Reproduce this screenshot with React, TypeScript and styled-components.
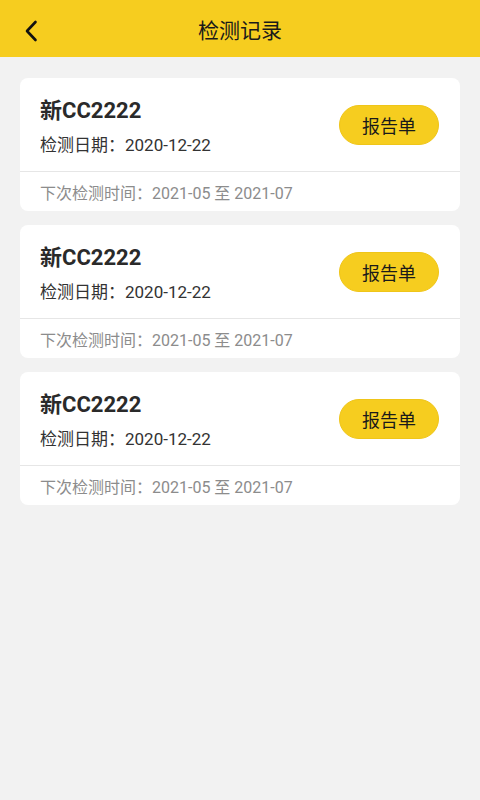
import React from "react";
import styled, { createGlobalStyle } from "styled-components";

const GlobalStyle = createGlobalStyle`
  html, body {
    margin: 0;
    padding: 0;
    background: #f2f2f2;
    font-family: Roboto, "Noto Sans CJK SC", sans-serif;
  }
`;

const Page = styled.div`
  width: 480px;
  min-height: 800px;
  background: #f2f2f2;
`;

const Header = styled.div`
  position: relative;
  height: 57px;
  background: #f6cd1f;
  display: flex;
  align-items: center;
  justify-content: center;
`;

const BackButton = styled.div`
  position: absolute;
  left: 24px;
  top: 18px;
  width: 20px;
  height: 26px;
  display: flex;
  align-items: center;
`;

const Title = styled.h1`
  margin: 0;
  font-size: 21px;
  font-weight: 400;
  color: #1a1a1a;
`;

const List = styled.div`
  display: flex;
  flex-direction: column;
  gap: 14px;
  padding: 21px 20px 0;
`;

const Card = styled.div`
  background: #fff;
  border-radius: 8px;
  overflow: hidden;
`;

const CardTop = styled.div`
  height: 94px;
  box-sizing: border-box;
  padding: 0 21px 0 20px;
  display: flex;
  align-items: center;
  justify-content: space-between;
  border-bottom: 1px solid #e6e6e6;
`;

const Info = styled.div`
  display: flex;
  flex-direction: column;
  gap: 8px;
  margin-top: 4px;
`;

const Plate = styled.div`
  font-size: 22px;
  line-height: 28px;
  font-weight: 700;
  color: #2a2a2a;
`;

const DateLine = styled.div`
  font-size: 17px;
  line-height: 24px;
  color: #333;
`;

const ReportButton = styled.button`
  width: 100px;
  height: 40px;
  border: 1px solid #efc519;
  border-radius: 20px;
  background: #f6cd1f;
  color: #1a1a1a;
  font-family: inherit;
  font-size: 18px;
  padding: 0;
`;

const Footer = styled.div`
  height: 39px;
  padding: 0 20px;
  display: flex;
  align-items: center;
  font-size: 16px;
  color: #8c8c8c;
`;

const records = [
  { plate: "新CC2222", date: "2020-12-22", next: "2021-05 至 2021-07" },
  { plate: "新CC2222", date: "2020-12-22", next: "2021-05 至 2021-07" },
  { plate: "新CC2222", date: "2020-12-22", next: "2021-05 至 2021-07" },
];

export default function App() {
  return (
    <Page>
      <GlobalStyle />
      <Header>
        <BackButton>
          <svg width="14" height="22" viewBox="0 0 14 22">
            <path d="M11.5 2 L3 11 L11.5 20" fill="none" stroke="#111" strokeWidth="2.6" strokeLinecap="round" strokeLinejoin="round" />
          </svg>
        </BackButton>
        <Title>检测记录</Title>
      </Header>
      <List>
        {records.map((r, i) => (
          <Card key={i}>
            <CardTop>
              <Info>
                <Plate>{r.plate}</Plate>
                <DateLine>检测日期：{r.date}</DateLine>
              </Info>
              <ReportButton>报告单</ReportButton>
            </CardTop>
            <Footer>下次检测时间：{r.next}</Footer>
          </Card>
        ))}
      </List>
    </Page>
  );
}
